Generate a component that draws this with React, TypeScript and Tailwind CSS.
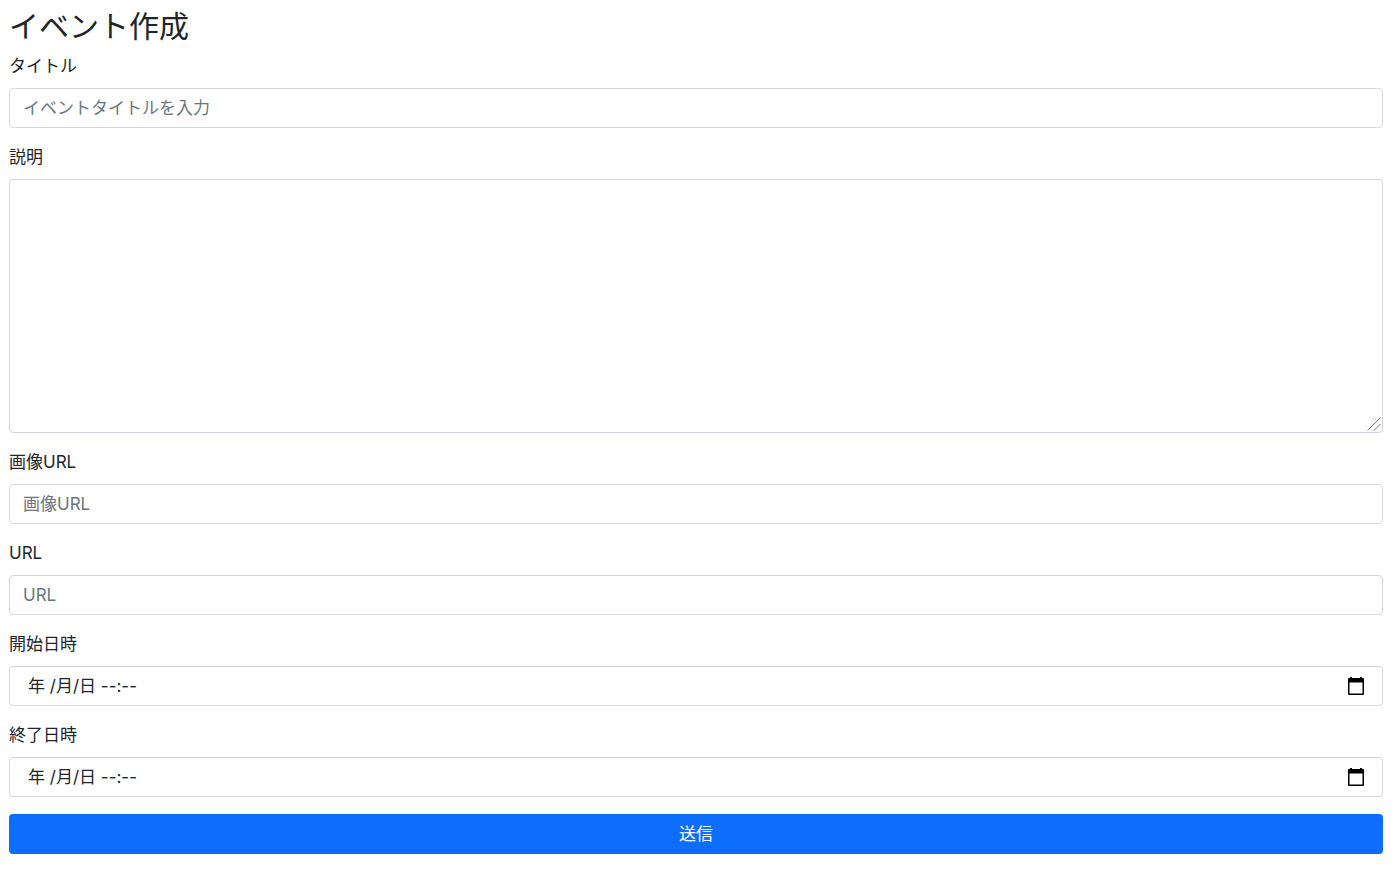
import { useId } from "react";
import type { ReactNode } from "react";

const control =
  "block w-full rounded border border-[#d4d9df] bg-white px-[13px] text-[17px] leading-[26px] text-[#212529] placeholder:text-[#6c757d] placeholder:opacity-100 focus:border-[#86b7fe] focus:outline-none";

function Field({ id, label, children }: { id: string; label: string; children: ReactNode }) {
  return (
    <div className="mb-4">
      <label htmlFor={id} className="mb-[9px] block w-fit">
        {label}
      </label>
      {children}
    </div>
  );
}

function TextField({ label, placeholder }: { label: string; placeholder: string }) {
  const id = useId();
  return (
    <Field id={id} label={label}>
      <input id={id} type="text" placeholder={placeholder} className={`${control} h-10`} />
    </Field>
  );
}

function TextAreaField({ label }: { label: string }) {
  const id = useId();
  return (
    <Field id={id} label={label}>
      <div className="relative">
        <textarea
          id={id}
          className={`${control} h-[254px] resize-y py-1.5 [&::-webkit-resizer]:bg-transparent`}
        />
        <svg
          viewBox="0 0 14 14"
          className="pointer-events-none absolute right-[2px] bottom-[2px] size-[14px]"
          fill="none"
          stroke="#777"
          aria-hidden="true"
        >
          <path d="M.5 13.5 13.5.5M7 13.5 13.5 7" />
        </svg>
      </div>
    </Field>
  );
}

function CalendarIcon() {
  return (
    <svg viewBox="0 0 18 18" className="size-[18px]" fill="black" aria-hidden="true">
      <path
        fillRule="evenodd"
        d="M3 0h2v1h8V0h2v1h1a1 1 0 0 1 1 1v15a1 1 0 0 1-1 1H2a1 1 0 0 1-1-1V2a1 1 0 0 1 1-1h1zM2.5 5.5v11h13v-11z"
      />
    </svg>
  );
}

function DateTimeField({ label }: { label: string }) {
  const id = useId();
  return (
    <Field id={id} label={label}>
      <div className="flex h-10 items-center rounded border border-[#d4d9df] bg-white pr-[17px] pl-[18px] focus-within:border-[#86b7fe]">
        <input
          id={id}
          type="text"
          placeholder="年 /月/日 --:--"
          className="min-w-0 flex-1 bg-transparent leading-[26px] placeholder:text-[#212529] placeholder:opacity-100 focus:outline-none"
        />
        <button type="button" aria-label={`${label}を選択`}>
          <CalendarIcon />
        </button>
      </div>
    </Field>
  );
}

export default function App() {
  return (
    <main
      lang="ja"
      className="bg-white pt-[6px] pr-[17px] pb-4 pl-[9px] font-[Inter,'Noto_Sans_CJK_JP',sans-serif] text-[17px] leading-[26px] text-[#212529]"
    >
      <h1 className="mb-[7px] text-[30px] leading-10 font-normal">イベント作成</h1>
      <form onSubmit={(e) => e.preventDefault()}>
        <TextField label="タイトル" placeholder="イベントタイトルを入力" />
        <TextAreaField label="説明" />
        <TextField label="画像URL" placeholder="画像URL" />
        <TextField label="URL" placeholder="URL" />
        <DateTimeField label="開始日時" />
        <DateTimeField label="終了日時" />
        <button
          type="submit"
          className="mt-[17px] block h-10 w-full rounded bg-[#0d6efd] text-center text-white hover:bg-[#0b5ed7]"
        >
          送信
        </button>
      </form>
    </main>
  );
}
